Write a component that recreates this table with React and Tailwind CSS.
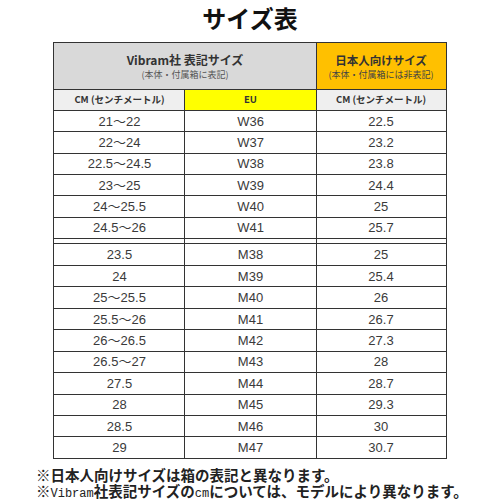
import React from "react";

const W = [
  ["21～22", "W36", "22.5"],
  ["22～24", "W37", "23.2"],
  ["22.5～24.5", "W38", "23.8"],
  ["23～25", "W39", "24.4"],
  ["24～25.5", "W40", "25"],
  ["24.5～26", "W41", "25.7"],
];
const M = [
  ["23.5", "M38", "25"],
  ["24", "M39", "25.4"],
  ["25～25.5", "M40", "26"],
  ["25.5～26", "M41", "26.7"],
  ["26～26.5", "M42", "27.3"],
  ["26.5～27", "M43", "28"],
  ["27.5", "M44", "28.7"],
  ["28", "M45", "29.3"],
  ["28.5", "M46", "30"],
  ["29", "M47", "30.7"],
];

const cjk = { fontFamily: '"Noto Sans CJK JP", "Noto Sans", sans-serif' };
const arial = { fontFamily: '"Liberation Sans", "Noto Sans CJK JP", sans-serif' };
const mono = { fontFamily: '"Liberation Mono", monospace' };

function Row({ r, h }) {
  return (
    <tr className={h}>
      {r.map((c, i) => (
        <td key={i} className="border border-[#333] p-0 text-center align-middle text-[13px] leading-none text-[#3a3a3a]">
          {c}
        </td>
      ))}
    </tr>
  );
}

export default function App() {
  return (
    <div className="w-[500px] h-[500px] bg-white overflow-hidden" style={cjk}>
      <div className="h-[36px] mb-[6px] flex items-center justify-center text-[24px] font-bold leading-none text-[#111]">
        サイズ表
      </div>
      <table className="mx-auto w-[392px] table-fixed border-collapse" style={arial}>
        <colgroup>
          <col className="w-[131px]" />
          <col className="w-[131px]" />
          <col className="w-[130px]" />
        </colgroup>
        <tbody>
          <tr className="h-[47px]">
            <td colSpan={2} className="border border-[#333] bg-[#d9d9d9] p-0 text-center align-middle" style={cjk}>
              <div className="text-[12px] font-bold leading-[16px] text-[#333]">Vibram社 表記サイズ</div>
              <div className="text-[9px] leading-[13px] text-[#555]">(本体・付属箱に表記)</div>
            </td>
            <td className="border border-[#333] bg-[#ffc000] p-0 text-center align-middle" style={cjk}>
              <div className="text-[11.5px] font-bold leading-[16px] text-[#333]">日本人向けサイズ</div>
              <div className="text-[9px] leading-[13px] text-[#444]">(本体・付属箱には非表記)</div>
            </td>
          </tr>
          <tr className="h-[21px]" style={cjk}>
            <td className="border border-[#333] bg-[#efefef] p-0 text-center align-middle text-[9.5px] font-bold leading-none text-[#333]">CM (センチメートル)</td>
            <td className="border border-[#333] bg-[#ffff00] p-0 text-center align-middle text-[9.5px] font-bold leading-none text-[#333]">EU</td>
            <td className="border border-[#333] bg-[#efefef] p-0 text-center align-middle text-[9.5px] font-bold leading-none text-[#333]">CM (センチメートル)</td>
          </tr>
          {W.map((r, i) => (
            <Row key={"w" + i} r={r} h="h-[21.33px]" />
          ))}
          <tr className="h-[5.5px]">
            <td className="border border-[#333] p-0"></td>
            <td className="border border-[#333] p-0"></td>
            <td className="border border-[#333] p-0"></td>
          </tr>
          {M.map((r, i) => (
            <Row key={"m" + i} r={r} h="h-[21.45px]" />
          ))}
        </tbody>
      </table>
      <div className="mt-[8px] pl-[36px] text-[14.5px] font-bold leading-[16.5px] text-[#222]">
        <div>※日本人向けサイズは箱の表記と異なります。</div>
        <div>
          ※<span className="text-[12px] font-normal" style={mono}>Vibram</span>社表記サイズの
          <span className="text-[12px] font-normal" style={mono}>cm</span>については、モデルにより異なります。
        </div>
      </div>
    </div>
  );
}
